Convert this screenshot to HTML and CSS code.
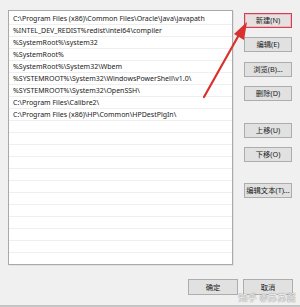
FILE: index.html
```html
<!DOCTYPE html>
<html lang="zh-CN">
<head>
    <meta charset="UTF-8">
    <title>编辑环境变量</title>
    <link rel="stylesheet" href="styles.css">
</head>
<body>
<div class="dialog">
    <div class="main">
        <div class="path-list">
            <div class="row">C:\Program Files (x86)\Common Files\Oracle\Java\javapath</div>
            <div class="row">%INTEL_DEV_REDIST%redist\intel64\compiler</div>
            <div class="row">%SystemRoot%\system32</div>
            <div class="row">%SystemRoot%</div>
            <div class="row">%SystemRoot%\System32\Wbem</div>
            <div class="row">%SYSTEMROOT%\System32\WindowsPowerShell\v1.0\</div>
            <div class="row">%SYSTEMROOT%\System32\OpenSSH\</div>
            <div class="row">C:\Program Files\Calibre2\</div>
            <div class="row">C:\Program Files (x86)\HP\Common\HPDestPlgIn\</div>
            <div class="row"></div>
            <div class="row"></div>
            <div class="row"></div>
            <div class="row"></div>
            <div class="row"></div>
            <div class="row"></div>
            <div class="row"></div>
            <div class="row"></div>
            <div class="row"></div>
            <div class="row"></div>
            <div class="row"></div>
            <div class="row"></div>
        </div>
        <div class="side-buttons">
            <button class="btn btn-new">新建(N)</button>
            <button class="btn btn-edit">编辑(E)</button>
            <button class="btn btn-browse">浏览(B)...</button>
            <button class="btn btn-delete">删除(D)</button>
            <button class="btn btn-up">上移(U)</button>
            <button class="btn btn-down">下移(O)</button>
            <button class="btn btn-text">编辑文本(T)...</button>
        </div>
    </div>
    <div class="footer">
        <button class="btn btn-foot">确定</button>
        <button class="btn btn-foot">取消</button>
    </div>
    <div class="bottom-bar"></div>

    <!-- 标注箭头 -->
    <svg class="arrow" width="300" height="307" viewBox="0 0 300 307">
        <line x1="204" y1="97" x2="240" y2="33" stroke="#d93030" stroke-width="2.2" stroke-linecap="round"/>
        <polygon points="247,22 244,40 234,34" fill="#d93030"/>
    </svg>
    <div class="watermark">知乎 @苏苏酱</div>
</div>
</body>
</html>
```

FILE: styles.css
```css
body {
    margin: 0;
    background-color: #f0f0f0;
    font-family: 'Noto Sans', 'Noto Sans CJK SC', sans-serif;
    color: #1a1a1a;
}

.dialog {
    position: relative;
    width: 300px;
    height: 307px;
    overflow: hidden;
}

.main {
    display: flex;
    padding: 10px 0 0 8px;
}

.path-list {
    width: 225px;
    height: 255px;
    border: 1px solid #a9a9a9;
    background-color: #fff;
    padding-top: 2px;
    box-sizing: border-box;
    overflow: hidden;
    box-shadow: 1px 1px 0 #e2e2e2;
}

.row {
    height: 12px;
    line-height: 12px;
    padding-left: 4px;
    font-size: 7px;
    white-space: nowrap;
    overflow: hidden;
    border-bottom: 1px solid #efefef;
    box-sizing: border-box;
}

.side-buttons {
    display: flex;
    flex-direction: column;
    margin-left: 11px;
}

.btn {
    width: 48px;
    height: 15px;
    padding: 0;
    border: 1px solid #adadad;
    background-color: #e1e1e1;
    font-family: 'Noto Sans', 'Noto Sans CJK SC', sans-serif;
    font-size: 7.3px;
    color: #1a1a1a;
    line-height: 13px;
}

.btn-new {
    margin-top: 3px;
    border: 1px solid #cf4256;
    background-color: #e6e0e1;
    box-shadow: inset 0 0 0 1px #eab9c0;
}

.btn-edit { margin-top: 9px; }
.btn-browse { margin-top: 10px; }
.btn-delete { margin-top: 9px; }
.btn-up { margin-top: 22px; }
.btn-down { margin-top: 9px; }
.btn-text { margin-top: 21px; }

.footer {
    display: flex;
    justify-content: flex-end;
    gap: 5px;
    padding: 14px 7px 0 0;
}

.btn-foot {
    width: 50px;
    height: 16px;
}

.bottom-bar {
    position: absolute;
    left: 0;
    bottom: 0;
    width: 300px;
    height: 2px;
    background-color: #c4c4c4;
}

.arrow {
    position: absolute;
    left: 0;
    top: 0;
    pointer-events: none;
}

.watermark {
    position: absolute;
    right: 4px;
    bottom: 5px;
    font-size: 9px;
    line-height: 9px;
    color: rgba(255, 255, 255, 0.9);
    text-shadow: 0 0 1px #8a8a8a, 0 0 1px #8a8a8a;
    letter-spacing: 0.3px;
}
```
